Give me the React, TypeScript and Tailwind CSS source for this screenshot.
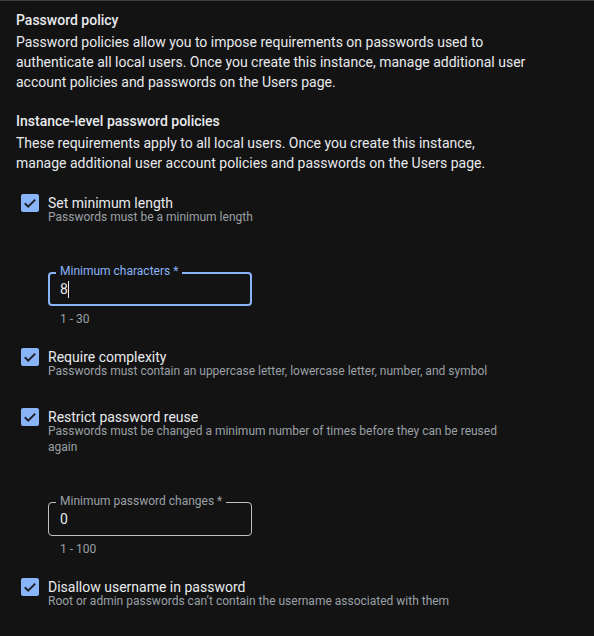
import React from "react";

function CheckIcon() {
  return (
    <svg viewBox="0 0 18 18" className="w-[18px] h-[18px]">
      <rect x="0" y="0" width="18" height="18" rx="2" fill="#8ab4f8" />
      <path d="M3.8 9.2 L7.2 12.6 L14.2 5.6" fill="none" stroke="#202124" strokeWidth="2" />
    </svg>
  );
}

function CheckRow({ label, hint }: { label: string; hint: string }) {
  return (
    <div className="flex items-start">
      <div className="w-[48px] pl-[21px] -mt-[3px] shrink-0">
        <CheckIcon />
      </div>
      <div className="flex flex-col pr-[80px]">
        <div className="text-[14px] leading-[12px] text-[#e8eaed]">{label}</div>
        <div className="text-[12px] leading-[16px] text-[#9aa0a6]">{hint}</div>
      </div>
    </div>
  );
}

function Field({ label, value, hint, focused }: { label: string; value: string; hint: string; focused?: boolean }) {
  return (
    <div className="pl-[48px]">
      <div className="relative w-[204px] h-[34px]">
        <div
          className={
            focused
              ? "absolute inset-0 rounded-[4px] border-2 border-[#8ab4f8]"
              : "absolute inset-0 rounded-[4px] border border-[#bdc1c6]"
          }
        />
        <span
          className={
            focused
              ? "absolute left-[8px] -top-[9px] px-[4px] bg-[#131313] text-[12px] leading-[16px] text-[#8ab4f8]"
              : "absolute left-[8px] -top-[9px] px-[4px] bg-[#131313] text-[12px] leading-[16px] text-[#9aa0a6]"
          }
        >
          {label}
        </span>
        <div className="absolute left-[12px] top-[7px] flex items-center text-[14px] leading-[20px] text-[#e8eaed]">
          {value}
          {focused && <span className="inline-block w-[1px] h-[17px] bg-[#e8eaed]" />}
        </div>
      </div>
      <div className="pl-[12px] pt-[5px] text-[12px] leading-[16px] text-[#9aa0a6]">{hint}</div>
    </div>
  );
}

export default function App() {
  return (
    <div
      className="w-[594px] h-[636px] bg-[#131313] border-t border-[#3c4043] overflow-hidden"
      style={{ fontFamily: "Roboto, 'Liberation Sans', sans-serif" }}
    >
      <div className="px-[16px] pt-[9px]">
        <div className="text-[14px] leading-[20px] font-medium text-[#e8eaed]">Password policy</div>
        <p className="mt-[2px] text-[14px] leading-[20px] text-[#e8eaed] pr-[36px]">
          Password policies allow you to impose requirements on passwords used to authenticate all local users. Once
          you create this instance, manage additional user account policies and passwords on the Users page.
        </p>
        <div className="mt-[19px] text-[14px] leading-[20px] font-medium text-[#e8eaed]">
          Instance-level password policies
        </div>
        <p className="mt-[2px] text-[14px] leading-[20px] text-[#e8eaed] pr-[60px]">
          These requirements apply to all local users. Once you create this instance, manage additional user account
          policies and passwords on the Users page.
        </p>
      </div>

      <div className="mt-[24px] flex flex-col">
        <CheckRow label="Set minimum length" hint="Passwords must be a minimum length" />
        <div className="mt-[47px]">
          <Field label="Minimum characters *" value="8" hint="1 - 30" focused />
        </div>
        <div className="mt-[24px]">
          <CheckRow
            label="Require complexity"
            hint="Passwords must contain an uppercase letter, lowercase letter, number, and symbol"
          />
        </div>
        <div className="mt-[32px]">
          <CheckRow
            label="Restrict password reuse"
            hint="Passwords must be changed a minimum number of times before they can be reused again"
          />
        </div>
        <div className="mt-[47px]">
          <Field label="Minimum password changes *" value="0" hint="1 - 100" />
        </div>
        <div className="mt-[24px]">
          <CheckRow
            label="Disallow username in password"
            hint="Root or admin passwords can’t contain the username associated with them"
          />
        </div>
      </div>
    </div>
  );
}
